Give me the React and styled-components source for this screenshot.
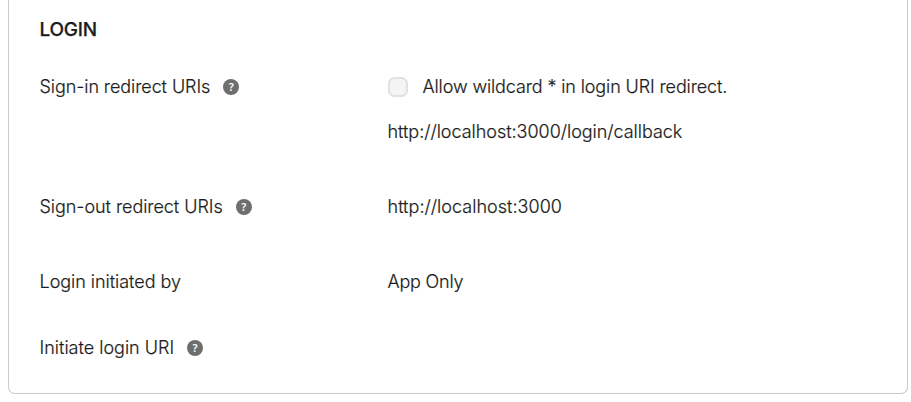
import React from "react";
import styled, { createGlobalStyle } from "styled-components";

const GlobalStyle = createGlobalStyle`
  * { box-sizing: border-box; }
  body { margin: 0; background: #fff; overflow: hidden; }
`;

const Page = styled.main`
  height: 402px;
  padding: 0 3px 8px 8px;
  font-family: Inter, sans-serif;
  font-size: 18px;
  line-height: 24px;
  color: #1d1d21;
`;

const Panel = styled.section`
  height: 394px;
  padding: 18px 30px 0 30.5px;
  border: 1px solid #c9c9c9;
  border-top: 0;
  border-radius: 0 0 7px 7px;
`;

const Heading = styled.h2`
  margin: 0 0 33px;
  font-size: 19px;
  line-height: 24px;
  font-weight: 500;
  letter-spacing: -0.2px;
  -webkit-text-stroke: 0.25px currentColor;
`;

const Row = styled.div`
  display: grid;
  grid-template-columns: 348px 1fr;
  align-items: start;
  margin-bottom: ${({ $gap }) => $gap}px;
`;

const Label = styled.div`
  display: flex;
  align-items: center;
  gap: 13px;
  font-weight: 300;
`;

const Values = styled.div`
  display: flex;
  flex-direction: column;
  gap: 21px;
  font-weight: 300;
`;

const Option = styled.label`
  display: flex;
  align-items: center;
  gap: 15px;
`;

const Checkbox = styled.span`
  width: 20px;
  height: 20px;
  border: 2px solid #e1e1e1;
  border-radius: 6.5px;
  background: #f4f4f4;
`;

const Text = styled.span`
  letter-spacing: ${({ $spacing }) => $spacing || 0}px;
  white-space: nowrap;
  -webkit-text-stroke: 0.2px currentColor;
`;

const HelpBadge = styled.span`
  display: flex;
  align-items: center;
  justify-content: center;
  width: 16px;
  height: 16px;
  border-radius: 50%;
  background: #6e6e6e;
  color: #fff;
  font-family: "Noto Sans", sans-serif;
  font-size: 11px;
  line-height: 16px;
  font-weight: 600;
`;

export default function App() {
  return (
    <Page>
      <GlobalStyle />
      <Panel>
        <Heading>LOGIN</Heading>
        <Row $gap={51}>
          <Label><Text $spacing={-0.08}>Sign-in redirect URIs</Text><HelpBadge>?</HelpBadge></Label>
          <Values>
            <Option><Checkbox /><Text $spacing={-0.12}>Allow wildcard * in login URI redirect.</Text></Option>
            <Text $spacing={-0.03}>http://localhost:3000/login/callback</Text>
          </Values>
        </Row>
        <Row $gap={51}>
          <Label><Text $spacing={-0.05}>Sign-out redirect URIs</Text><HelpBadge>?</HelpBadge></Label>
          <Values><Text $spacing={0.03}>http://localhost:3000</Text></Values>
        </Row>
        <Row $gap={42}>
          <Label><Text $spacing={-0.03}>Login initiated by</Text></Label>
          <Values><Text $spacing={-0.2}>App Only</Text></Values>
        </Row>
        <Row $gap={0}>
          <Label><Text>Initiate login URI</Text><HelpBadge>?</HelpBadge></Label>
        </Row>
      </Panel>
    </Page>
  );
}
